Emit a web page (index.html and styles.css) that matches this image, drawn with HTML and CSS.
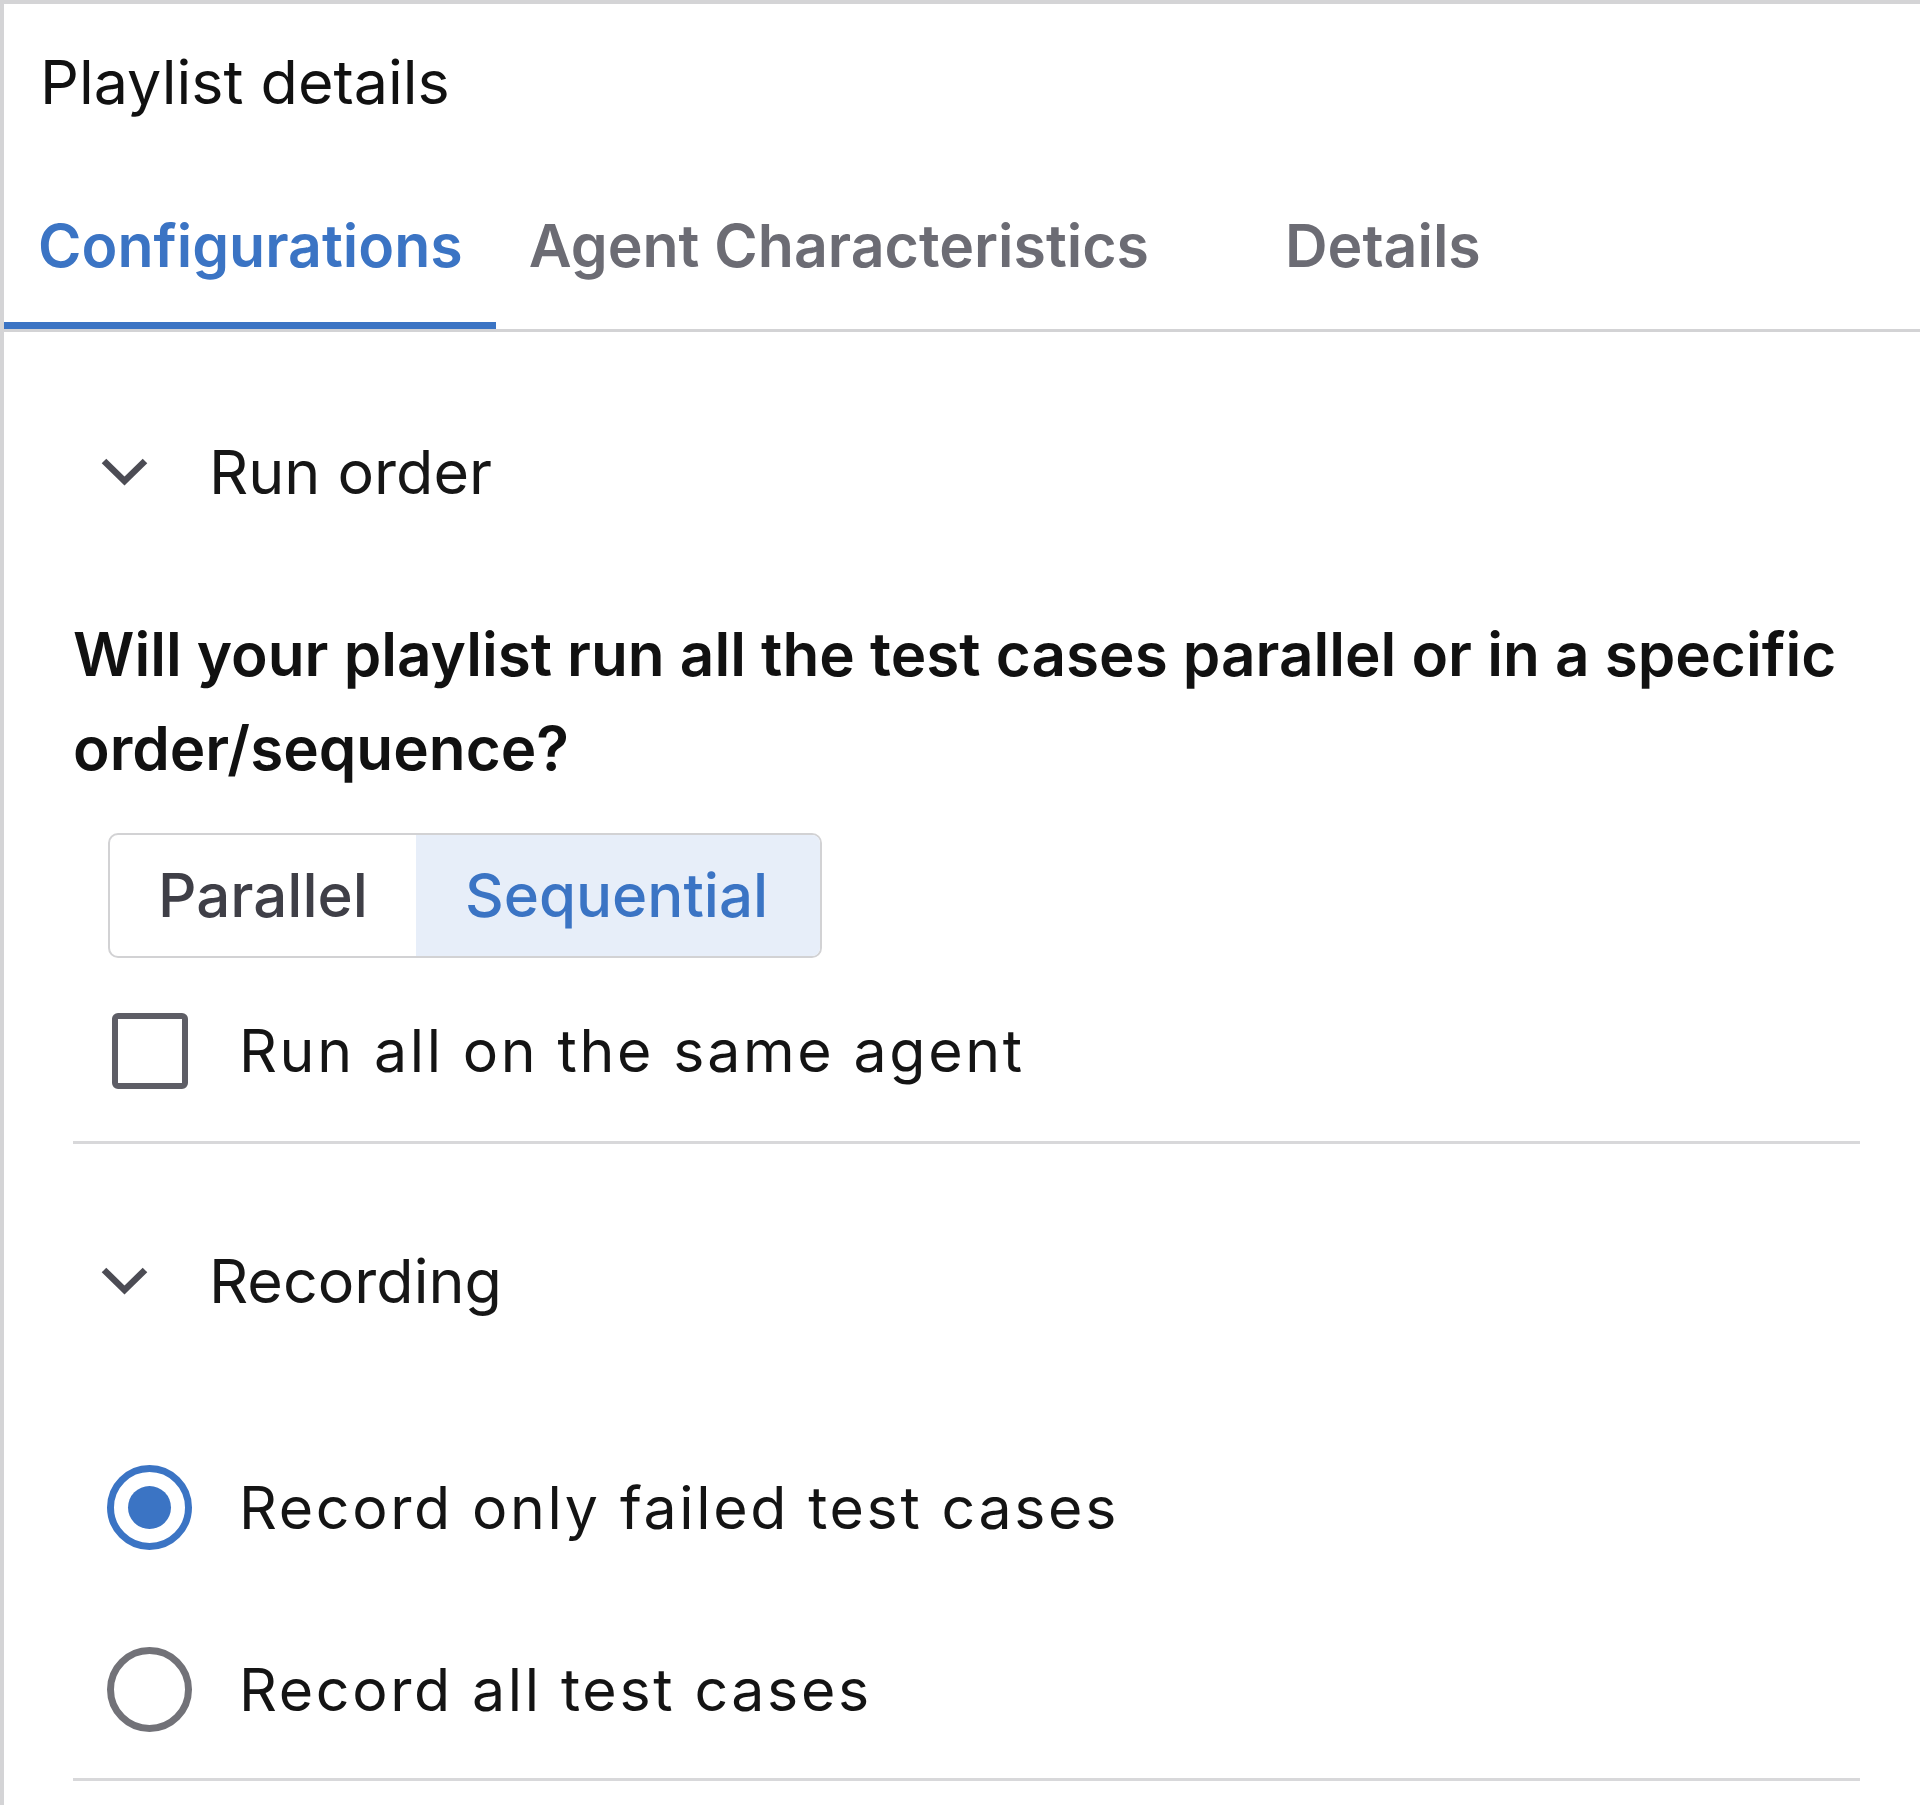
FILE: index.html
```html
<!DOCTYPE html>
<html lang="en">
<head>
<meta charset="utf-8">
<title>Playlist details</title>
<link rel="stylesheet" href="styles.css">
</head>
<body>
<div class="panel">
  <h1 class="title">Playlist details</h1>
  <div class="tabs">
    <div class="tab tab-config active">Configurations</div>
    <div class="tab tab-agent">Agent Characteristics</div>
    <div class="tab tab-details">Details</div>
  </div>
  <div class="content">
    <section class="section">
      <div class="sec-head">
        <svg class="chev" viewBox="0 0 49 30" width="49" height="30"><polyline points="4,4 24.5,24 45,4" fill="none" stroke="#4c4c54" stroke-width="6.5" stroke-linecap="butt" stroke-linejoin="miter"/></svg>
        <span class="sec-title">Run order</span>
      </div>
      <p class="question">Will your playlist run all the test cases parallel or in a specific order/sequence?</p>
      <div class="segmented">
        <div class="seg">Parallel</div>
        <div class="seg selected">Sequential</div>
      </div>
      <label class="opt check-row">
        <span class="checkbox"></span>
        <span class="opt-text">Run all on the same agent</span>
      </label>
    </section>
    <section class="section">
      <div class="sec-head">
        <svg class="chev" viewBox="0 0 49 30" width="49" height="30"><polyline points="4,4 24.5,24 45,4" fill="none" stroke="#4c4c54" stroke-width="6.5" stroke-linecap="butt" stroke-linejoin="miter"/></svg>
        <span class="sec-title">Recording</span>
      </div>
      <div class="radios">
        <label class="opt radio-row">
          <span class="radio on"><span class="dot"></span></span>
          <span class="opt-text">Record only failed test cases</span>
        </label>
        <label class="opt radio-row">
          <span class="radio"></span>
          <span class="opt-text">Record all test cases</span>
        </label>
      </div>
    </section>
  </div>
</div>
</body>
</html>
```

FILE: styles.css
```css
html, body {
  margin: 0;
  padding: 0;
  background: #ffffff;
}
body {
  font-family: Inter, "Noto Sans", sans-serif;
  color: #141414;
}
.panel {
  border-top: 4px solid #d4d4d6;
  border-left: 4px solid #d4d4d6;
  min-height: 1805px;
  box-sizing: border-box;
}
.title {
  margin: 0;
  padding: 38px 0 0 36px;
  font-size: 61px;
  font-weight: 400;
  line-height: 80px;
  color: #111;
}
.tabs {
  display: flex;
  margin-top: 84px;
  border-bottom: 3px solid #d3d3d5;
}
.tab {
  font-size: 59px;
  font-weight: 600;
  line-height: 80px;
  padding: 0 36px 36px;
  border-bottom: 7px solid transparent;
  color: #6c6c74;
}
.tab-config {
  padding-left: 34px;
  padding-right: 33px;
}
.tab-agent {
  padding-left: 33px;
}
.tab.active {
  color: #3b74c4;
  border-bottom-color: #3b74c4;
}
.tab-details {
  margin-left: 64px;
}
.content {
  margin-left: 69px;
  width: 1787px;
}
.section {
  border-bottom: 3px solid #d8d8da;
}
.sec-head {
  display: flex;
  align-items: center;
  height: 80px;
  margin-top: 100px;
}
.section + .section .sec-head {
  margin-top: 97px;
}
.chev {
  margin-left: 27px;
  flex: none;
}
.sec-title {
  margin-left: 60px;
  font-size: 61px;
  line-height: 80px;
  font-weight: 400;
  color: #161616;
}
.question {
  margin: 96px 0 0;
  font-size: 60.2px;
  font-weight: 600;
  line-height: 94px;
  color: #111;
}
.segmented {
  display: inline-flex;
  margin: 37px 0 0 35px;
  border: 2px solid #d2d2d4;
  border-radius: 10px;
  overflow: hidden;
  height: 121px;
}
.seg {
  font-size: 60px;
  font-weight: 500;
  line-height: 121px;
  padding: 0 48px;
  color: #3f3f47;
}
.seg.selected {
  background: #e7eef9;
  color: #3b74c4;
  padding-left: 49px;
  padding-right: 52px;
}
.opt {
  display: flex;
  align-items: center;
}
.check-row {
  margin: 53px 0 50px 39px;
}
.checkbox {
  width: 76px;
  height: 76px;
  box-sizing: border-box;
  border: 6px solid #5e5e66;
  border-radius: 6px;
  flex: none;
}
.opt-text {
  font-size: 59px;
  line-height: 80px;
  letter-spacing: 2.65px;
  color: #141414;
}
.check-row .opt-text {
  margin-left: 51px;
}
.radios {
  display: flex;
  flex-direction: column;
  gap: 97px;
  margin: 144px 0 46px 34px;
}
.radio {
  width: 85px;
  height: 85px;
  box-sizing: border-box;
  border: 7px solid #727278;
  border-radius: 50%;
  flex: none;
  display: flex;
  align-items: center;
  justify-content: center;
}
.radio.on {
  border-color: #3b74c4;
}
.dot {
  width: 43px;
  height: 43px;
  border-radius: 50%;
  background: #3b74c4;
}
.radio-row .opt-text {
  margin-left: 47px;
}
```
